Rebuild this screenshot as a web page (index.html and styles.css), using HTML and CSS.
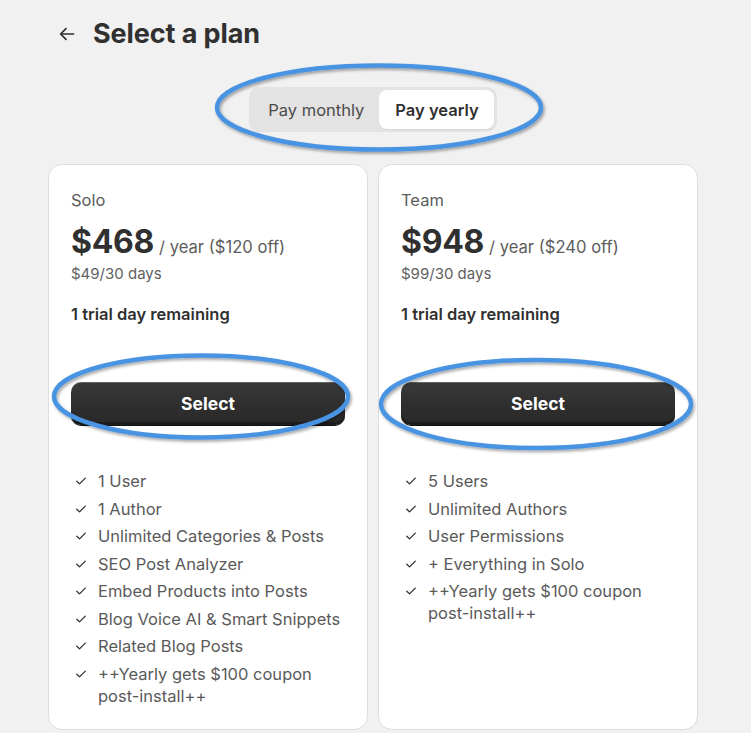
FILE: index.html
```html
<!DOCTYPE html>
<html>
<head>
<meta charset="utf-8">
<link rel="stylesheet" href="styles.css">
</head>
<body>
<main class="page">
  <header class="header">
    <svg class="back" width="20" height="20" viewBox="0 0 20 20"><path d="M16.5 10H3.8M9 4.6L3.6 10 9 15.4" fill="none" stroke="#303030" stroke-width="1.7" stroke-linecap="round" stroke-linejoin="round"/></svg>
    <h1 class="title">Select a plan</h1>
  </header>
  <div class="toggle-wrap">
    <div class="toggle">
      <span class="opt">Pay monthly</span>
      <span class="opt active">Pay yearly</span>
    </div>
  </div>
  <section class="plans">
    <article class="card">
      <div class="name">Solo</div>
      <div class="price"><span class="amount">$468</span> <span class="per">/ year ($120 off)</span></div>
      <div class="sub">$49/30 days</div>
      <div class="trial">1 trial day remaining</div>
      <button class="select">Select</button>
      <ul class="features">
        <li><svg class="chk" viewBox="0 0 12 12"><path d="M1.8 6.3l2.7 2.6 5.8-5.8" fill="none" stroke="#303030" stroke-width="1.3" stroke-linecap="round" stroke-linejoin="round"/></svg><span>1 User</span></li>
        <li><svg class="chk" viewBox="0 0 12 12"><path d="M1.8 6.3l2.7 2.6 5.8-5.8" fill="none" stroke="#303030" stroke-width="1.3" stroke-linecap="round" stroke-linejoin="round"/></svg><span>1 Author</span></li>
        <li><svg class="chk" viewBox="0 0 12 12"><path d="M1.8 6.3l2.7 2.6 5.8-5.8" fill="none" stroke="#303030" stroke-width="1.3" stroke-linecap="round" stroke-linejoin="round"/></svg><span>Unlimited Categories &amp; Posts</span></li>
        <li><svg class="chk" viewBox="0 0 12 12"><path d="M1.8 6.3l2.7 2.6 5.8-5.8" fill="none" stroke="#303030" stroke-width="1.3" stroke-linecap="round" stroke-linejoin="round"/></svg><span>SEO Post Analyzer</span></li>
        <li><svg class="chk" viewBox="0 0 12 12"><path d="M1.8 6.3l2.7 2.6 5.8-5.8" fill="none" stroke="#303030" stroke-width="1.3" stroke-linecap="round" stroke-linejoin="round"/></svg><span>Embed Products into Posts</span></li>
        <li><svg class="chk" viewBox="0 0 12 12"><path d="M1.8 6.3l2.7 2.6 5.8-5.8" fill="none" stroke="#303030" stroke-width="1.3" stroke-linecap="round" stroke-linejoin="round"/></svg><span>Blog Voice AI &amp; Smart Snippets</span></li>
        <li><svg class="chk" viewBox="0 0 12 12"><path d="M1.8 6.3l2.7 2.6 5.8-5.8" fill="none" stroke="#303030" stroke-width="1.3" stroke-linecap="round" stroke-linejoin="round"/></svg><span>Related Blog Posts</span></li>
        <li><svg class="chk" viewBox="0 0 12 12"><path d="M1.8 6.3l2.7 2.6 5.8-5.8" fill="none" stroke="#303030" stroke-width="1.3" stroke-linecap="round" stroke-linejoin="round"/></svg><span>++Yearly gets $100 coupon post-install++</span></li>
      </ul>
    </article>
    <article class="card">
      <div class="name">Team</div>
      <div class="price"><span class="amount">$948</span> <span class="per">/ year ($240 off)</span></div>
      <div class="sub">$99/30 days</div>
      <div class="trial">1 trial day remaining</div>
      <button class="select">Select</button>
      <ul class="features">
        <li><svg class="chk" viewBox="0 0 12 12"><path d="M1.8 6.3l2.7 2.6 5.8-5.8" fill="none" stroke="#303030" stroke-width="1.3" stroke-linecap="round" stroke-linejoin="round"/></svg><span>5 Users</span></li>
        <li><svg class="chk" viewBox="0 0 12 12"><path d="M1.8 6.3l2.7 2.6 5.8-5.8" fill="none" stroke="#303030" stroke-width="1.3" stroke-linecap="round" stroke-linejoin="round"/></svg><span>Unlimited Authors</span></li>
        <li><svg class="chk" viewBox="0 0 12 12"><path d="M1.8 6.3l2.7 2.6 5.8-5.8" fill="none" stroke="#303030" stroke-width="1.3" stroke-linecap="round" stroke-linejoin="round"/></svg><span>User Permissions</span></li>
        <li><svg class="chk" viewBox="0 0 12 12"><path d="M1.8 6.3l2.7 2.6 5.8-5.8" fill="none" stroke="#303030" stroke-width="1.3" stroke-linecap="round" stroke-linejoin="round"/></svg><span>+ Everything in Solo</span></li>
        <li><svg class="chk" viewBox="0 0 12 12"><path d="M1.8 6.3l2.7 2.6 5.8-5.8" fill="none" stroke="#303030" stroke-width="1.3" stroke-linecap="round" stroke-linejoin="round"/></svg><span>++Yearly gets $100 coupon post-install++</span></li>
      </ul>
    </article>
  </section>
</main>
<svg class="marks" width="751" height="733" viewBox="0 0 751 733">
  <defs>
    <filter id="sh" x="-10%" y="-20%" width="120%" height="140%">
      <feDropShadow dx="1.5" dy="2" stdDeviation="1.5" flood-color="#000" flood-opacity="0.35"/>
    </filter>
  </defs>
  <g fill="none" stroke="#4a94e2" stroke-width="4.5" filter="url(#sh)">
    <ellipse cx="379" cy="107.5" rx="162" ry="42"/>
    <ellipse cx="201" cy="396.5" rx="147" ry="41"/>
    <ellipse cx="536" cy="404" rx="155" ry="44"/>
  </g>
</svg>
</body>
</html>
```

FILE: styles.css
```css
* { box-sizing: border-box; }
html, body { margin: 0; padding: 0; }
body {
  background: #f1f1f1;
  font-family: Inter, "Noto Sans", "Liberation Sans", sans-serif;
  color: #303030;
  width: 751px;
  height: 733px;
  overflow: hidden;
  position: relative;
}
.page {
  width: 650px;
  margin-left: 48px;
  padding-top: 16px;
}
.header {
  display: flex;
  align-items: center;
  gap: 16px;
  padding-left: 9px;
  height: 36px;
}
.back { width: 20px; height: 20px; display: block; }
.title {
  margin: 0;
  font-size: 27px;
  font-weight: 650;
  letter-spacing: -0.1px;
  color: #303030;
  line-height: 36px;
}
.toggle-wrap {
  display: flex;
  justify-content: center;
  margin-top: 35px;
}
.toggle {
  display: flex;
  background: #e3e3e3;
  border-radius: 10px;
  padding: 3px;
  gap: 0;
}
.opt {
  font-size: 16.5px;
  line-height: 24px;
  padding: 8px 15px 7px 16px;
  color: #4a4a4a;
  border-radius: 8px;
}
.opt.active {
  background: #fff;
  color: #303030;
  font-weight: 600;
  padding: 8px 15px 7px 16px;
  box-shadow: 0 1px 1px rgba(0,0,0,0.06);
}
.plans {
  display: grid;
  grid-template-columns: 320px 320px;
  gap: 10px;
  margin-top: 32px;
}
.card {
  background: #fff;
  border: 1px solid #dedede;
  border-radius: 14px;
  padding: 23px 22px 20px 22px;
  height: 566px;
}
.name {
  font-size: 16.5px;
  line-height: 24px;
  color: #5c5c5c;
}
.price {
  margin-top: 10px;
  height: 40px;
  display: flex;
  align-items: baseline;
  gap: 5px;
}
.amount {
  font-size: 32px;
  line-height: 40px;
  font-weight: 700;
  letter-spacing: -0.3px;
  color: #303030;
}
.per {
  font-size: 16.6px;
  line-height: 1;
  color: #5c5c5c;
}
.sub {
  font-size: 15px;
  line-height: 20px;
  color: #616161;
  margin-top: 2px;
}
.trial {
  margin-top: 18px;
  font-size: 16.5px;
  line-height: 24px;
  font-weight: 600;
  color: #303030;
}
.select {
  display: block;
  width: 100%;
  margin-top: 56px;
  height: 43px;
  border: none;
  border-radius: 10px;
  background: linear-gradient(#3a3a3a, #2e2e2e 55%, #2a2a2a);
  color: #fff;
  font-family: inherit;
  font-size: 17.5px;
  font-weight: 700;
  box-shadow: inset 0 1px 0 rgba(255,255,255,0.2), inset 0 -3px 0 #1c1c1c, 0 1px 0 #111;
  cursor: pointer;
}
.features {
  list-style: none;
  margin: 45px 0 0 0;
  padding: 0;
  display: flex;
  flex-direction: column;
  gap: 5.5px;
}
.features li {
  display: flex;
  align-items: flex-start;
  gap: 11px;
  font-size: 16.5px;
  line-height: 22px;
  color: #5a5a5a;
  padding-left: 4px;
}
.chk {
  width: 12px;
  height: 12px;
  flex: none;
  margin-top: 5px;
}
.features li span { max-width: 250px; }
.marks {
  position: absolute;
  left: 0;
  top: 0;
  pointer-events: none;
}
```
